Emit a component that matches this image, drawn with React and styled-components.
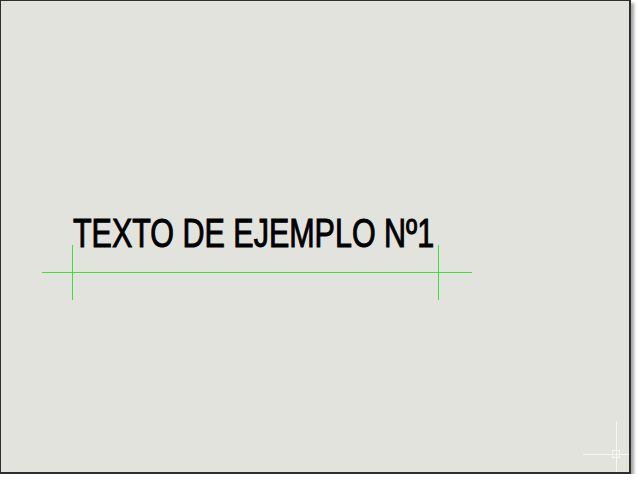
import styled, { createGlobalStyle } from 'styled-components';

const GlobalStyle = createGlobalStyle`
  html, body {
    margin: 0;
    padding: 0;
    background: #ffffff;
  }
`;

const Viewport = styled.div`
  position: relative;
  box-sizing: border-box;
  width: 631px;
  height: 474px;
  background: #e3e3de;
  border-top: 1px solid #2e2e2e;
  border-left: 1px solid #2e2e2e;
  border-right: 2px solid #2e2e2e;
  border-bottom: 2px solid #2e2e2e;
  box-shadow: 3px 3px 3px rgba(0, 0, 0, 0.35);
  overflow: hidden;
`;

const Label = styled.div`
  position: absolute;
  left: ${p => p.x}px;
  top: ${p => p.y}px;
  font-family: 'Liberation Sans', Arial, sans-serif;
  font-size: 40px;
  line-height: 1;
  color: #000;
  -webkit-text-stroke: 1px #000;
  white-space: nowrap;
  transform: scaleX(0.762);
  transform-origin: left top;
`;

const Line = styled.div`
  position: absolute;
  left: ${p => p.x}px;
  top: ${p => p.y}px;
  width: ${p => p.w}px;
  height: ${p => p.h}px;
  background: ${p => p.color};
`;

const Pick = styled.div`
  position: absolute;
  left: ${p => p.x}px;
  top: ${p => p.y}px;
  width: 6px;
  height: 6px;
  border: 1px solid #f6f6f3;
`;

const GREEN = '#3ee03e';
const WHITE = '#f6f6f3';

export default function App() {
  return (
    <>
      <GlobalStyle />
      <Viewport>
        <Label x={72} y={212}>TEXTO DE EJEMPLO Nº1</Label>
        <Line x={41} y={271} w={430} h={1} color={GREEN} />
        <Line x={71} y={244} w={1} h={55} color={GREEN} />
        <Line x={437} y={244} w={1} h={55} color={GREEN} />
        <Line x={615} y={420} w={1} h={60} color={WHITE} />
        <Line x={582} y={453} w={60} h={1} color={WHITE} />
        <Pick x={611} y={449} />
      </Viewport>
    </>
  );
}
